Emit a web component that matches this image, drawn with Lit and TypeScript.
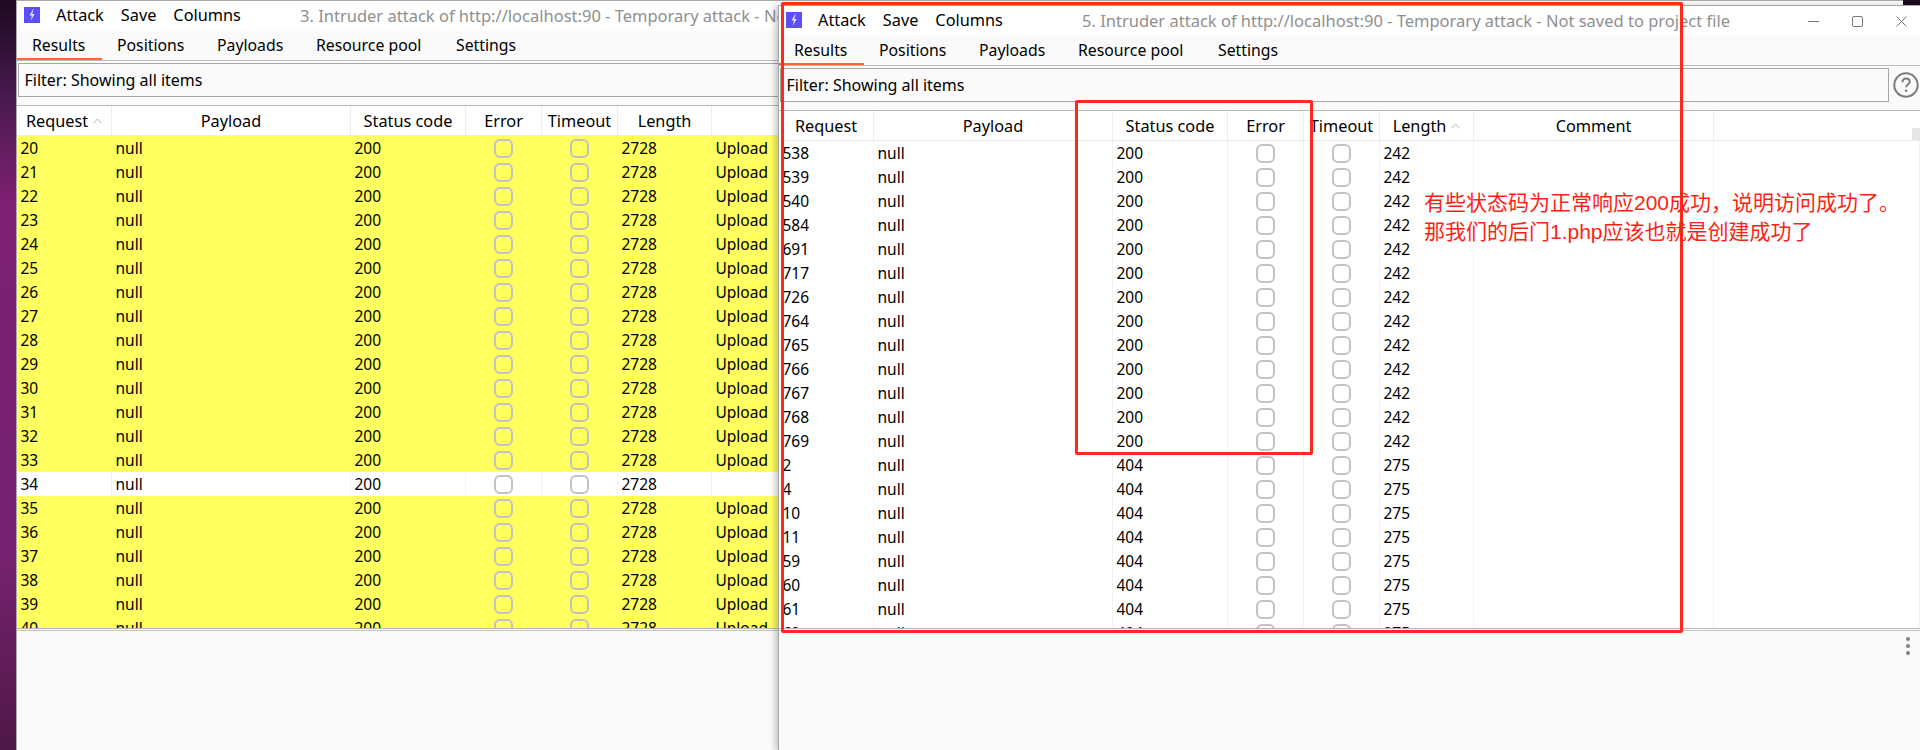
import { LitElement, html, css } from "lit";
import { customElement, property } from "lit/decorators.js";

interface Row { id: string; status: string; length: string; comment: string; hl: boolean; }

const COLS = ["Request", "Payload", "Status code", "Error", "Timeout", "Length", "Comment"];
const TABS = ["Results", "Positions", "Payloads", "Resource pool", "Settings"];

const leftRows: Row[] = Array.from({ length: 21 }, (_, i) => {
  const id = 20 + i;
  const plain = id === 34;
  return { id: String(id), status: "200", length: "2728", comment: plain ? "" : "Upload", hl: !plain };
});

const rightIds200 = ["538", "539", "540", "584", "691", "717", "726", "764", "765", "766", "767", "768", "769"];
const rightIds404 = ["2", "4", "10", "11", "59", "60", "61", "62"];
const rightRows: Row[] = [
  ...rightIds200.map((id) => ({ id, status: "200", length: "242", comment: "", hl: false })),
  ...rightIds404.map((id) => ({ id, status: "404", length: "275", comment: "", hl: false })),
];

const chevron = html`<svg class="sort" width="9" height="6" viewBox="0 0 9 6"><path d="M.5 5.2 4.5 1l4 4.2" fill="none" stroke="#b4b4b4" stroke-width="1"/></svg>`;

@customElement("attack-window")
class AttackWindow extends LitElement {
  @property() heading = "";
  @property() sorted = "";
  @property({ type: Boolean }) controls = false;
  @property({ attribute: false }) rows: Row[] = [];

  static styles = css`
    :host {
      display: flex;
      flex-direction: column;
      height: 100%;
      background: #fafafa;
      color: #000;
      font-family: "Noto Sans", "Open Sans", sans-serif;
      font-size: 15.5px;
      border-left: 1px solid #a8a8a8;
      border-top: 1px solid #a8a8a8;
      box-sizing: border-box;
    }
    .title {
      height: 30px;
      flex: none;
      box-sizing: border-box;
      padding-bottom: 2px;
      background: #fff;
      display: flex;
      align-items: center;
      white-space: nowrap;
      overflow: hidden;
      font-size: 16.3px;
    }
    .logo { margin-left: 7px; flex: none; }
    .menu { margin-left: 16px; display: flex; gap: 17px; }
    .name { position: absolute; left: var(--title-left, 283px); color: #8f8f8f; font-size: 16.5px; }
    .winctl { margin-left: auto; display: flex; align-items: center; gap: 33px; padding: 2px 13px 0 0; }
    .tabs {
      height: 30px;
      flex: none;
      box-sizing: border-box;
      display: grid;
      grid-template-columns: 85px 100px 99px 140px auto;
      justify-content: start;
      border-bottom: 1px solid #bcbcbc;
      font-size: 15.8px;
    }
    .tab {
      padding-left: 15px;
      line-height: 28px;
      height: 27px;
      white-space: nowrap;
      border-bottom: 2px solid transparent;
    }
    .tab.on { border-bottom-color: #ff6633; }
    .filterbar {
      height: 45px;
      flex: none;
      box-sizing: border-box;
      padding: 2px 0 0 1px;
      display: flex;
      gap: 4px;
      border-bottom: 1px solid #bcbcbc;
    }
    .filter {
      width: 1109px;
      height: 34px;
      box-sizing: border-box;
      border: 1px solid #a6a6a6;
      padding-left: 5.5px;
      line-height: 32px;
      flex: none;
      font-size: 16px;
    }
    .help { flex: none; margin-top: 4px; }
    .head, .row {
      display: grid;
      grid-template-columns: 95px 239px 115px 76px 76px 94px 240px 1fr;
      min-width: 0;
    }
    .head {
      height: 30px;
      flex: none;
      background: #fff;
      border-bottom: 1px solid #ececec;
      box-sizing: border-box;
      position: relative;
      font-size: 16.3px;
    }
    .hc {
      display: flex;
      align-items: center;
      justify-content: center;
      gap: 5px;
      border-right: 1px solid #ececec;
      box-sizing: border-box;
      padding-top: 1px;
      white-space: nowrap;
    }
    .hc.end { border-right: none; }
    .thumb { position: absolute; right: 0; top: 17px; width: 8px; height: 12px; background: #e6e6e6; }
    .body { flex: 1; min-height: 0; overflow: hidden; background: #fff; }
    .row { height: 24px; line-height: 24px; background: #fff; }
    .row.hl { background: #ffff60; }
    .c { padding-left: 3.5px; border-right: 1px solid #f3f3f3; overflow: hidden; white-space: nowrap; }
    .row.hl .c { border-right-color: transparent; }
    .c.check { padding: 1px 0 0; display: flex; justify-content: center; align-items: center; box-sizing: border-box; }
    .box {
      width: 19px;
      height: 19px;
      box-sizing: border-box;
      border: 2px solid #c2c2c2;
      border-radius: 6px;
    }
    .panel {
      height: 122px;
      flex: none;
      box-sizing: border-box;
      border-top: 1px solid #b4b4b4;
      background: #fafafa;
      position: relative;
    }
    .panel::before { content: ""; display: block; height: 1px; margin-top: 1px; background: #c4c4c4; }
    .dots { position: absolute; right: 10px; top: 8px; display: flex; flex-direction: column; gap: 3px; }
    .dots i { width: 4px; height: 4px; border-radius: 50%; background: #808080; display: block; }
  `;

  render() {
    return html`
      <div class="title">
        <svg class="logo" width="16" height="16" viewBox="0 0 16 16">
          <rect width="16" height="16" fill="#5b50f5"/>
          <path d="M9 2.2 5.6 8.4h2.3L6.8 13.8 10.6 7H8.2l1.3-4.8z" fill="#e8e6ff"/>
        </svg>
        <div class="menu"><span>Attack</span><span>Save</span><span>Columns</span></div>
        <span class="name">${this.heading}</span>
        ${this.controls
          ? html`<div class="winctl">
              <svg width="11" height="11" viewBox="0 0 11 11"><path d="M0 5.5h11" stroke="#777" stroke-width="1"/></svg>
              <svg width="11" height="11" viewBox="0 0 11 11"><rect x=".5" y=".5" width="10" height="10" rx="1.5" fill="none" stroke="#777"/></svg>
              <svg width="11" height="11" viewBox="0 0 11 11"><path d="M.5.5l10 10M10.5.5l-10 10" stroke="#777" stroke-width="1"/></svg>
            </div>`
          : ""}
      </div>
      <div class="tabs">
        ${TABS.map((t, i) => html`<div class="tab ${i === 0 ? "on" : ""}">${t}</div>`)}
      </div>
      <div class="filterbar">
        <div class="filter">Filter: Showing all items</div>
        ${this.controls
          ? html`<svg class="help" width="26" height="26" viewBox="0 0 26 26">
              <circle cx="13" cy="13" r="11.7" fill="none" stroke="#7c7c7c" stroke-width="2"/>
              <path d="M9.4 10.2c0-2.2 1.6-3.6 3.7-3.6s3.6 1.3 3.6 3.2c0 2.6-3.6 2.8-3.6 5.4" fill="none" stroke="#7c7c7c" stroke-width="2"/>
              <circle cx="13.1" cy="18.8" r="1.3" fill="#7c7c7c"/>
            </svg>`
          : ""}
      </div>
      <div class="head">
        ${COLS.map((c) => html`<div class="hc"><span>${c}</span>${c === this.sorted ? chevron : ""}</div>`)}
        <div class="hc end"></div>
        ${this.controls ? html`<div class="thumb"></div>` : ""}
      </div>
      <div class="body">
        ${this.rows.map(
          (r) => html`<div class="row ${r.hl ? "hl" : ""}">
            <div class="c">${r.id}</div>
            <div class="c">null</div>
            <div class="c">${r.status}</div>
            <div class="c check"><div class="box"></div></div>
            <div class="c check"><div class="box"></div></div>
            <div class="c">${r.length}</div>
            <div class="c">${r.comment}</div>
            <div class="c"></div>
          </div>`
        )}
      </div>
      <div class="panel">
        ${this.controls ? html`<div class="dots"><i></i><i></i><i></i></div>` : ""}
      </div>
    `;
  }
}

@customElement("app-root")
class AppRoot extends LitElement {
  static styles = css`
    :host {
      display: block;
      position: relative;
      width: 1920px;
      height: 750px;
      overflow: hidden;
      background: linear-gradient(180deg, #1c0a20 0, #4a1a50 100px, #7e2072 200px, #762270 560px, #4e1846 750px);
    }
    .win { position: absolute; }
    .back { left: 16px; top: 0; width: 1887px; height: 750px; --title-left: 283px; }
    .front { left: 778px; top: 5px; width: 1142px; height: 745px; --title-left: 303px; box-shadow: -3px 0 6px rgba(0, 0, 0, 0.22); }
    .mark {
      position: absolute;
      box-sizing: border-box;
      border: 3px solid #ff2a1a;
      border-radius: 2px;
      pointer-events: none;
    }
    .mark.outer { left: 781px; top: 2px; width: 902px; height: 631px; }
    .mark.inner { left: 1075px; top: 100px; width: 238px; height: 355px; }
    .note {
      position: absolute;
      left: 1424px;
      top: 188px;
      font-family: "Liberation Sans", "Noto Sans CJK SC", sans-serif;
      font-size: 21px;
      line-height: 29px;
      color: #ff1f14;
      white-space: nowrap;
    }
  `;

  render() {
    return html`
      <attack-window class="win back" heading="3. Intruder attack of http://localhost:90 - Temporary attack - Not saved to project file" sorted="Request" .rows=${leftRows}></attack-window>
      <attack-window class="win front" heading="5. Intruder attack of http://localhost:90 - Temporary attack - Not saved to project file" sorted="Length" controls .rows=${rightRows}></attack-window>
      <div class="mark outer"></div>
      <div class="mark inner"></div>
      <div class="note">有些状态码为正常响应200成功，说明访问成功了。<br />那我们的后门1.php应该也就是创建成功了</div>
    `;
  }
}
